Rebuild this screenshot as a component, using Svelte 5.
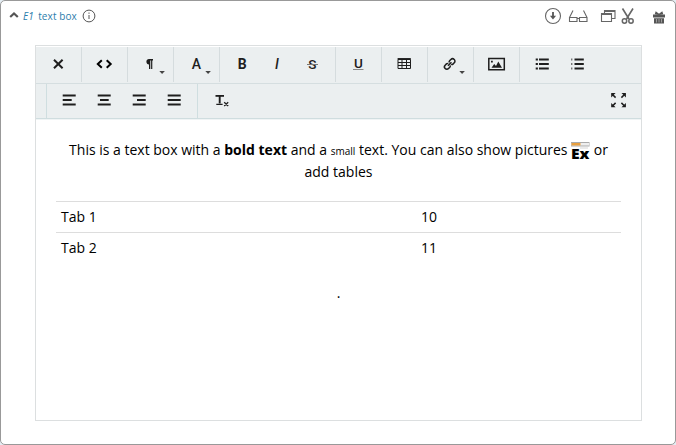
<script>
  const lines = [11.5, 16, 20.5];
  const align = {
    left: [[10.7, 23.7], [10.7, 19.7], [10.7, 23.7]],
    center: [[10.7, 23.7], [13, 21.7], [10.7, 23.7]],
    right: [[10.7, 23.7], [15, 23.7], [10.7, 23.7]],
    justify: [[10.7, 23.7], [10.7, 23.7], [10.7, 23.7]]
  };
  const groups = [
    ['close'], ['code'], ['paragraph'], ['font'],
    ['bold', 'italic', 'strike'], ['underline'], ['table'],
    ['link'], ['image'], ['ul', 'ol']
  ];
  const second = [[], ['left', 'center', 'right', 'justify'], ['clear']];
  const rows = [['Tab 1', '10'], ['Tab 2', '11']];
</script>

{#snippet icon(name)}
  <svg width="35" height="35" viewBox="0 0 35 35" fill="none" stroke="#1e1e1e" stroke-width="2">
    {#if name === 'close'}
      <path d="M13 12.7l8.6 8.6M21.6 12.7L13 21.3" />
    {:else if name === 'code'}
      <path stroke="#000" d="M14.800 13.200L10.800 17l4 3.800M19.700 13.200l4 3.800-4 3.800" />
    {:else if name === 'paragraph'}
      <path fill="#1e1e1e" stroke="none" d="M20 12v1.4h-.7V22h-1.2v-8.600h-.8V22H16v-4.600c-1.600 0-2.600-1.100-2.600-2.700S14.500 12 16 12z" />
    {:else if name === 'font'}
      <text x="17.300" y="22">A</text>
    {:else if name === 'bold'}
      <text x="17.300" y="22" class="b">B</text>
    {:else if name === 'italic'}
      <text x="17" y="22" class="i">I</text>
    {:else if name === 'strike'}
      <text x="17.300" y="22" class="s">S</text>
      <path stroke="#777" stroke-width="1" d="M12 17.500h11" />
    {:else if name === 'underline'}
      <text x="17.300" y="20.500" class="u">U</text>
      <path stroke="#888" stroke-width="1" d="M12 22.500h10.500" />
    {:else if name === 'table'}
      <path stroke-width="1" d="M11 12.500h12.500v9H11zM11 15.500h12.500M11 18.500h12.500M15 12v10M19.500 12v10" />
      <path stroke-width="1.500" d="M10.600 11.800h13.200" />
    {:else if name === 'link'}
      <g transform="translate(16.700 17) rotate(-45) scale(.88)" stroke-width="1.700">
        <path d="M-1-1.400a1.500 1.500 0 0 0-1.500-1.300h-2.100a2.700 2.700 0 0 0 0 5.400h2.100A1.500 1.500 0 0 0-1 1.400M1-1.400a1.500 1.500 0 0 1 1.500-1.300h2.100a2.700 2.700 0 0 1 0 5.400H2.500A1.500 1.500 0 0 1 1 1.400M-2.800 0h5.600" />
      </g>
    {:else if name === 'image'}
      <path stroke-width="1.500" d="M9.800 11.600h15.500v11.200H9.800z" />
      <path fill="#1e1e1e" stroke="none" d="M12.500 20.800l2.700-3.800 1.800 2 2.300-4.500 3.700 6.300zM12 13.800h1.800v1.800H12z" />
    {:else if name === 'ul'}
      <path d="M14 12.500h9.800M14 17h9.800M14 21.500h9.800M10.700 12.500h2.200M10.700 17h2.200M10.700 21.500h2.200" />
    {:else if name === 'ol'}
      <path d="M14.500 12.500h9.300M14.500 17h9.300M14.500 21.500h9.300" />
      <path stroke="#444" stroke-width="1" d="M11.800 11.500v2M11.800 16v2M11.800 20.500v2" />
    {:else if name === 'clear'}
      <path stroke-width="1.800" d="M12.500 11.900h8.500" />
      <path stroke-width="1.900" d="M16.700 12v7.500" />
      <path stroke-width="1.300" d="M13.300 20.400h6.300M21.200 18.200l4 3.800M25.200 18.200l-4 3.800" />
    {:else if name === 'full'}
      <g stroke-width="1.500">
        <path d="M11 10l3.600 3.600M24 10l-3.600 3.600M11 22.500l3.600-3.600M24 22.500l-3.600-3.600" />
        <path fill="#1e1e1e" stroke="none" d="M10.200 9h4.400L10.200 13.400zM24.900 9h-4.400l4.400 4.400zM10.200 23.300h4.400l-4.400-4.400zM24.900 23.300h-4.400l4.400-4.400z" />
      </g>
    {:else}
      {#each align[name] as [a, b], n}
        <path d="M{a} {lines[n]}H{b}" />
      {/each}
    {/if}
    {#if ['paragraph', 'font', 'link'].includes(name)}
      <path fill="#444" stroke="none" d="M26.300 24h5.600l-2.800 2.900z" />
    {/if}
  </svg>
{/snippet}

<section class="card">
  <header>
    <div class="title">
      <svg class="chev" width="10" height="7" viewBox="0 0 10 7"><path d="M1.200 5L5 1.500 8.800 5" fill="none" stroke="#555" stroke-width="2.200" /></svg>
      <em>E1</em><span>text box</span>
      <svg class="info" width="14" height="14" viewBox="0 0 14 14" fill="none" stroke="#555"><circle cx="7" cy="7" r="5.900" /><path d="M7 6v4M7 3.500v1.300" /></svg>
    </div>
    <svg class="tools" width="124" height="20" viewBox="0 0 124 20" fill="none" stroke="#666" stroke-width="1.100">
      <circle cx="9" cy="10" r="7.500" />
      <path d="M9 6v5" stroke-width="2" /><path d="M5.900 9.800h6.200L9 13.500z" fill="#555" stroke="none" />
      <path d="M25.500 11.500h7.500v4h-7.500zM35.500 11.500h7.500v4h-7.500zM33 12.500h2.500M25.500 11.500L29 4.500M43 11.500L39.500 4.500" />
      <path d="M57.500 7.500h10v8h-10zM57.500 8.500h10M60.500 7.500v-3h10.500v8h-3M60.500 5.500h10.500" />
      <path d="M78.500 2.500l6.500 10.500M89 2.500l-6.500 10.500" stroke-width="1.600" />
      <circle cx="80.500" cy="15" r="2.200" stroke-width="1.500" /><circle cx="87" cy="15" r="2.200" stroke-width="1.500" />
      <path fill="#555" stroke="none" d="M109 8.500h12v3h-12zM110 12.300h10V17.500h-10z" />
      <path stroke="#555" stroke-width="1.200" d="M115 8.500l-3.500-.8.500-1.500zM115 8.500l3.500-.8-.5-1.500z" />
      <path stroke="#ccc" stroke-width=".6" d="M112.500 13v3.500M115 13v3.500M117.500 13v3.500" />
    </svg>
  </header>

  <div class="editor">
    <div class="bar first">
      {#each groups as g, n}
        <div class="group" class:last={n === groups.length - 1}>
          {#each g as name}<button aria-label={name}>{@render icon(name)}</button>{/each}
        </div>
      {/each}
    </div>
    <div class="bar second">
      {#each second as g, n}
        <div class="group" class:last={n === second.length - 1}>
          {#each g as name}<button aria-label={name}>{@render icon(name)}</button>{/each}
        </div>
      {/each}
      <div class="group last end"><button aria-label="full">{@render icon('full')}</button></div>
    </div>
    <div class="body">
      <p>This is a text box with a <b>bold text</b> and a <small>small</small> text. You can also show pictures
        <svg class="pic" width="19" height="18" viewBox="0 0 19 18"><path fill="#aaa" d="M0 0h18.500v4.500H0z" /><path fill="#eee" d="M.5 1H18v2.500H.5z" /><path fill="#e8a040" d="M.5 1h9v2.500h-9z" /><path stroke="#aaa" stroke-dasharray="1 1" d="M9.500 6h8" /><text x="0" y="16.500" textLength="18.500" lengthAdjust="spacingAndGlyphs">Ex</text></svg>
        or add tables</p>
      <table>
        <tbody>
          {#each rows as [a, b]}<tr><td class="a">{a}</td><td>{b}</td></tr>{/each}
        </tbody>
      </table>
      <p class="dot">.</p>
    </div>
  </div>
</section>

<style>
  :global(body) { background: #e4edf3; }
  * { box-sizing: border-box; }
  .card { height: 445px; border: 1px solid #999; border-radius: 5px; background: #fff; font-family: "Open Sans", "Noto Sans", sans-serif; color: #000; }
  header { display: flex; justify-content: space-between; height: 44px; padding: 5px 7px 0 8px; }
  .title { display: flex; align-items: center; height: 20px; font-size: 10px; color: #2c7dab; }
  .title span { letter-spacing: .1px; }
  .chev { margin: 0 4px 1px 0; }
  em { margin-right: 4.5px; }
  .info { margin-left: 5px; }
  svg { display: block; }
  .editor { display: flex; flex-direction: column; width: 607px; height: 376px; margin-left: 34px; border: 1px solid #dcdfe0; }
  .bar { display: flex; background: #ebeff0; }
  .first { height: 38px; border-top: 1px solid #fff; border-bottom: 1px solid #d5dee0; }
  .second { height: 35px; border-bottom: 1px solid #cfdddf; box-shadow: 0 1px #f0f4f5; }
  .group { display: flex; height: 35px; padding: 0 5px; border-right: 1px solid #d5dcde; }
  .second .group { height: 34px; border-color: #cfdee0; }
  .group.last { border-right: 0; }
  .end { margin-left: auto; }
  button { width: 35px; height: 35px; padding: 0; border: 0; background: none; }
  button text { font: 500 14px Roboto, sans-serif; text-anchor: middle; fill: #1e1e1e; stroke: none; }
  button .b { font-weight: 700; }
  button .i { font-style: italic; font-weight: 500; }
  button .s { font-size: 13.5px; }
  button .u { font-size: 13.5px; }
  .body { padding: 20px; font-size: 14px; line-height: 22px; }
  p { margin: 0; text-align: center; }
  small { font-size: 10px; line-height: 1; }
  .pic { display: inline-block; vertical-align: -5px; margin: -3px 0 0; overflow: visible; }
  .pic text { font: 800 13.5px "Open Sans", sans-serif; }
  table { width: 565px; margin-top: 18px; border-collapse: collapse; table-layout: fixed; }
  td { height: 31px; padding: 0 5px; border-top: 1px solid #ddd; }
  .a { width: 360px; }
  .dot { margin-top: 18px; }
</style>
